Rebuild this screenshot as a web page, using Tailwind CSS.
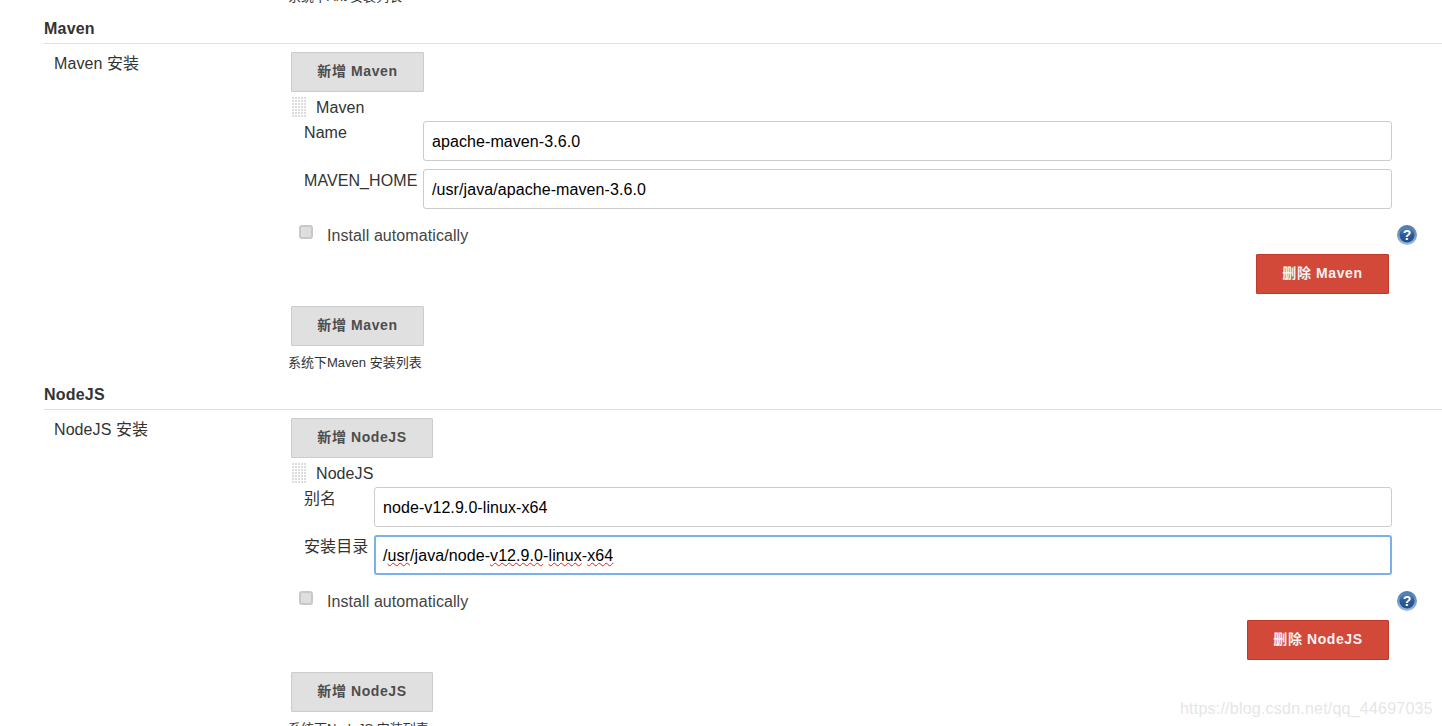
<!DOCTYPE html>
<html lang="zh-CN">
<head>
<meta charset="utf-8">
<title>Jenkins tools</title>
<script src="https://cdn.jsdelivr.net/npm/@tailwindcss/browser@4"></script>
</head>
<body class="bg-white">
<svg width="0" height="0" class="absolute">
  <defs>
    <pattern id="dots" x="0" y="0" width="3" height="3" patternUnits="userSpaceOnUse"><rect width="2" height="2" fill="#dcdcdc"/></pattern>
    <linearGradient id="ring" x1="0" y1="0" x2="0" y2="1"><stop offset="0" stop-color="#4a78b0"/><stop offset="1" stop-color="#9dbbdc"/></linearGradient>
    <linearGradient id="help" x1="0" y1="0" x2="0" y2="1"><stop offset="0" stop-color="#5b86bb"/><stop offset="0.5" stop-color="#2a5a98"/><stop offset="1" stop-color="#23508c"/></linearGradient>
  </defs>
</svg>
<div class="relative h-[726px] w-[1442px] overflow-hidden text-[16px] tracking-[0.08px] text-[#333] font-['Liberation_Sans','Noto_Sans_CJK_SC',sans-serif]">
  <p class="-mt-[12px] mb-[6px] h-[18px] pl-[288px] text-[13px] leading-[18px] tracking-normal">系统下Ant 安装列表</p>

  <section>
    <h2 class="ml-[44px] flex h-[32px] items-center border-b border-[#e0e0e0] pt-[2px] font-bold tracking-[0.2px] text-[#333]">Maven</h2>
    <div class="flex">
      <div class="w-[291px] pl-[54px] pt-[9px] leading-[22px]">Maven 安装</div>
      <div class="w-[1126px] pt-[8px]">
        <button class="block h-[40px] w-[133px] rounded-[1px] border border-[#ccc] bg-[#e0e0e0] pb-[2px] text-[14px] font-bold tracking-[0.6px] text-[#4d4d4d]">新增 Maven</button>
        <div class="mt-[5px] flex h-[21px] items-center">
          <svg width="15" height="21" class="ml-[1px]"><rect width="15" height="21" fill="url(#dots)"/></svg>
          <span class="ml-[9px] leading-[21px]">Maven</span>
        </div>
        <div class="mt-[3px] flex pl-[13px] pr-[25px]">
          <label class="w-[119px] pt-[1px] leading-[22px]">Name</label>
          <input class="h-[40px] flex-1 rounded-[3px] border border-[#ccc] bg-white px-[8px] pt-[2px] text-black outline-none" value="apache-maven-3.6.0">
        </div>
        <div class="mt-[8px] flex pl-[13px] pr-[25px]">
          <label class="w-[119px] pt-[1px] leading-[22px]">MAVEN_HOME</label>
          <input class="h-[40px] flex-1 rounded-[3px] border border-[#ccc] bg-white px-[8px] pt-[2px] text-black outline-none" value="/usr/java/apache-maven-3.6.0">
        </div>
        <div class="mt-[12px] flex h-[28px] items-center">
          <span class="ml-[8px] -mt-[6px] block h-[14px] w-[14px] rounded-[3px] border-2 border-[#c8c8c8] bg-[#dedede]"></span>
          <span class="ml-[14px] flex-1 pt-[2px] text-[#444]">Install automatically</span>
          <svg width="20" height="20" viewBox="0 0 20 20"><circle cx="10" cy="10" r="10" fill="url(#ring)"/><circle cx="10" cy="10" r="7.5" fill="url(#help)"/><text x="10" y="15" text-anchor="middle" font-size="14" font-weight="700" fill="#fff" font-family="Liberation Sans">?</text></svg>
        </div>
        <div class="mt-[5px] flex justify-end pr-[28px]">
          <button class="h-[40px] w-[133px] rounded-[1px] border border-[#c0392b] bg-[#d24939] pb-[2px] text-[14px] font-bold tracking-[0.6px] text-[#f2f2f2]">删除 Maven</button>
        </div>
        <button class="mt-[12px] block h-[40px] w-[133px] rounded-[1px] border border-[#ccc] bg-[#e0e0e0] pb-[2px] text-[14px] font-bold tracking-[0.6px] text-[#4d4d4d]">新增 Maven</button>
        <p class="-ml-[3px] mb-[6px] mt-[8px] h-[18px] text-[13px] leading-[18px] tracking-normal">系统下Maven 安装列表</p>
      </div>
    </div>
  </section>

  <section>
    <h2 class="ml-[44px] flex h-[32px] items-center border-b border-[#e0e0e0] pt-[2px] font-bold tracking-[0.2px] text-[#333]">NodeJS</h2>
    <div class="flex">
      <div class="w-[291px] pl-[54px] pt-[9px] leading-[22px]">NodeJS 安装</div>
      <div class="w-[1126px] pt-[8px]">
        <button class="block h-[40px] w-[142px] rounded-[1px] border border-[#ccc] bg-[#e0e0e0] pb-[2px] text-[14px] font-bold tracking-[0.6px] text-[#4d4d4d]">新增 NodeJS</button>
        <div class="mt-[5px] flex h-[21px] items-center">
          <svg width="15" height="21" class="ml-[1px]"><rect width="15" height="21" fill="url(#dots)"/></svg>
          <span class="ml-[9px] leading-[21px]">NodeJS</span>
        </div>
        <div class="mt-[3px] flex pl-[13px] pr-[25px]">
          <label class="w-[70px] pt-[1px] leading-[22px]">别名</label>
          <input class="h-[40px] flex-1 rounded-[3px] border border-[#ccc] bg-white px-[8px] pt-[2px] text-black outline-none" value="node-v12.9.0-linux-x64">
        </div>
        <div class="mt-[8px] flex pl-[13px] pr-[25px]">
          <label class="w-[70px] pt-[1px] leading-[22px]">安装目录</label>
          <div class="flex h-[40px] flex-1 items-center rounded-[3px] border-2 border-[#7ab0ee] bg-white px-[7px] pt-[2px] text-black">/<span class="underline decoration-wavy decoration-[#e02020] decoration-1">usr</span>/java/node-<span class="underline decoration-wavy decoration-[#e02020] decoration-1">v12.9.0</span>-<span class="underline decoration-wavy decoration-[#e02020] decoration-1">linux</span>-<span class="underline decoration-wavy decoration-[#e02020] decoration-1">x64</span></div>
        </div>
        <div class="mt-[12px] flex h-[28px] items-center">
          <span class="ml-[8px] -mt-[6px] block h-[14px] w-[14px] rounded-[3px] border-2 border-[#c8c8c8] bg-[#dedede]"></span>
          <span class="ml-[14px] flex-1 pt-[2px] text-[#444]">Install automatically</span>
          <svg width="20" height="20" viewBox="0 0 20 20"><circle cx="10" cy="10" r="10" fill="url(#ring)"/><circle cx="10" cy="10" r="7.5" fill="url(#help)"/><text x="10" y="15" text-anchor="middle" font-size="14" font-weight="700" fill="#fff" font-family="Liberation Sans">?</text></svg>
        </div>
        <div class="mt-[5px] flex justify-end pr-[28px]">
          <button class="h-[40px] w-[142px] rounded-[1px] border border-[#c0392b] bg-[#d24939] pb-[2px] text-[14px] font-bold tracking-[0.6px] text-[#f2f2f2]">删除 NodeJS</button>
        </div>
        <button class="mt-[12px] block h-[40px] w-[142px] rounded-[1px] border border-[#ccc] bg-[#e0e0e0] pb-[2px] text-[14px] font-bold tracking-[0.6px] text-[#4d4d4d]">新增 NodeJS</button>
        <p class="-ml-[3px] mt-[8px] h-[18px] text-[13px] leading-[18px] tracking-normal">系统下NodeJS 安装列表</p>
      </div>
    </div>
  </section>

  <div class="absolute left-[1180px] top-[698px] text-[16px] leading-[22px] tracking-[0.22px] text-[#e6e6e6]">https://blog.csdn.net/qq_44697035</div>
</div>
</body>
</html>
